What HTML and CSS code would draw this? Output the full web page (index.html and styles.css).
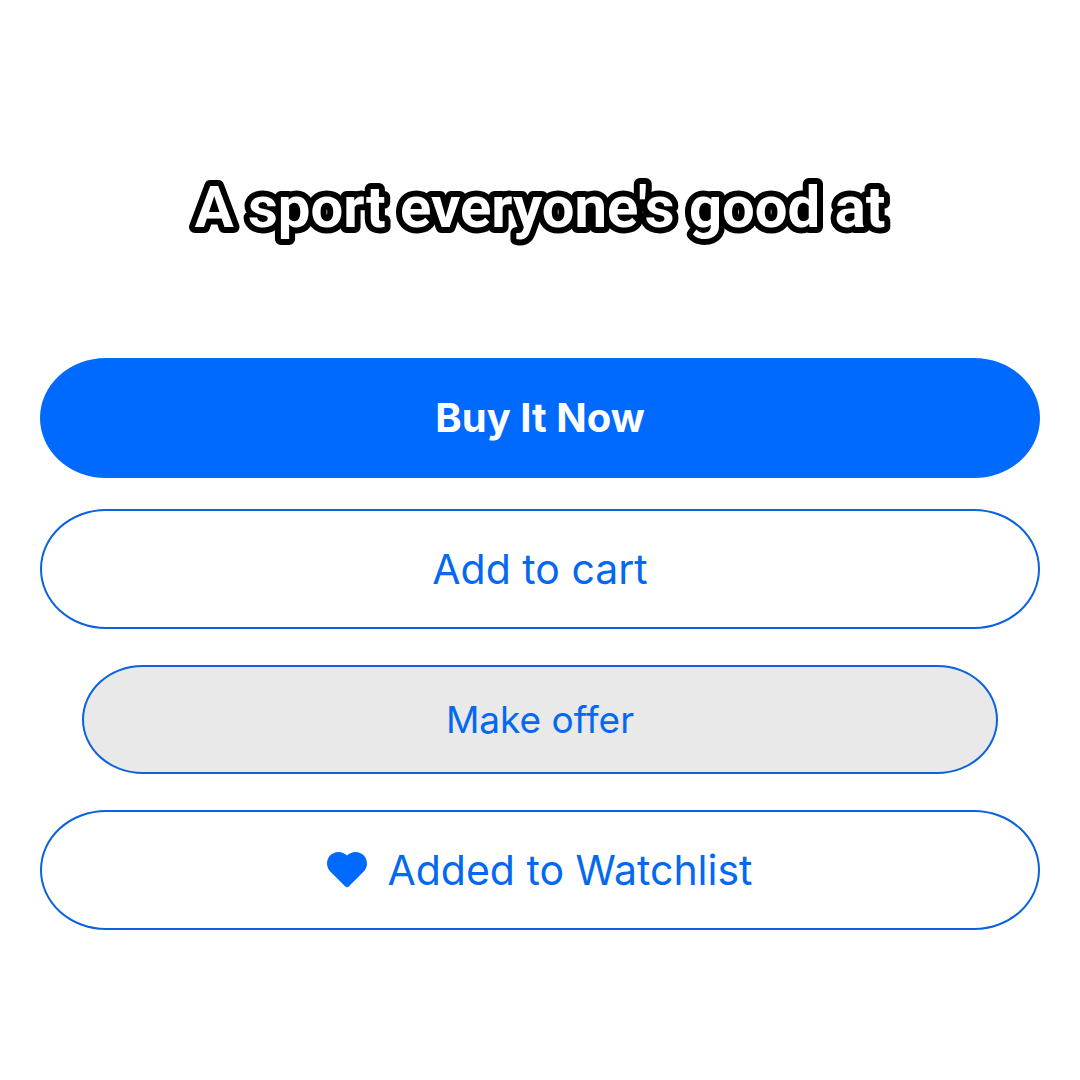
FILE: index.html
```html
<!DOCTYPE html>
<html lang="en">
<head>
  <meta charset="UTF-8">
  <title>A sport everyone's good at</title>
  <meta name="viewport" content="width=device-width, initial-scale=1.0">
  <link rel="stylesheet" href="styles.css">
</head>
<body>

  <!-- svg text so the outline gets round joins -->
  <h1 class="caption">
    <svg class="caption-art">
      <text x="50%" y="51" text-anchor="middle">A sport everyone's good at</text>
    </svg>
  </h1>

  <!-- Listing actions -->
  <main class="actions">
    <button type="button" class="btn btn-primary">Buy It Now</button>
    <button type="button" class="btn">Add to cart</button>
    <button type="button" class="btn btn-pressed">Make offer</button>
    <button type="button" class="btn">
      <svg class="heart" viewBox="0 0 40 36" aria-hidden="true">
        <path d="M20 3.500C17.500 1.200 14.800 0 11.500 0C5 0 0 5 0 11.500C0 14.800 1.300 17.500 3.500 19.800L18.300 34.500Q20 36.100 21.700 34.500L36.500 19.800C38.700 17.500 40 14.800 40 11.500C40 5 35 0 28.500 0C25.200 0 22.500 1.200 20 3.500Z"/>
      </svg>
      Added to Watchlist
    </button>
  </main>

</body>
</html>
```
FILE: styles.css
```css
body {
  margin: 0;
  padding: 176px 40px 40px;
  background: #fff;
  font-family: Inter, "Liberation Sans", sans-serif;
}

.caption {
  margin: 0 0 110px;
  font-family: Roboto, "Liberation Sans", sans-serif;
  font-size: 58px;
  font-weight: 700;
}

.caption-art {
  display: block;
  width: 100%;
  height: 72px;
  overflow: visible;
}

.caption-art text {
  fill: #fff;
  stroke: #000;
  stroke-width: 12px;
  stroke-linejoin: round;
  paint-order: stroke fill;
}

.actions {
  display: flex;
  flex-direction: column;
  gap: 31px;
}

.btn {
  display: flex;
  align-items: center;
  justify-content: center;
  gap: 20px;
  height: 120px;
  padding: 0 40px;
  border: 2px solid #0a62dc;
  border-radius: 66px / 60px;
  background: #fff;
  color: #0468f0;
  font-family: inherit;
  font-size: 41px;
  font-weight: 430;
  line-height: 48px;
  cursor: pointer;
}

.btn-primary {
  border-color: #006aff;
  background: #006aff;
  color: #fff;
  font-size: 40px;
  font-weight: 700;
}

/* held down: the button shrinks and turns grey */
.btn-pressed {
  height: 109px;
  margin: 5px 42px;
  border-radius: 61px / 55px;
  background: #e9e9e9;
  font-size: 37px;
}

.heart {
  width: 40px;
  height: 36px;
  fill: #006aff;
}
```
